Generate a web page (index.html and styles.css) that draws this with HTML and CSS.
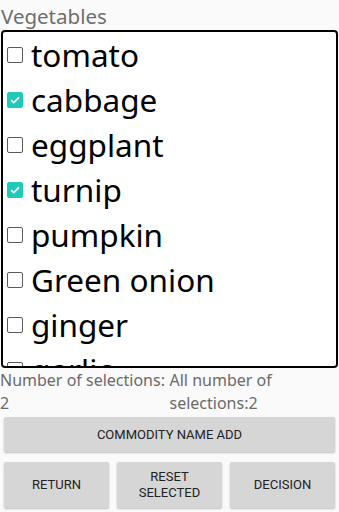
FILE: index.html
```html
<!DOCTYPE html>
<html>
<head>
<meta charset="utf-8">
<link rel="stylesheet" href="styles.css">
</head>
<body>
<div class="screen">
  <div class="title">Vegetables</div>
  <div class="list">
    <div class="row"><span class="cb"></span><span class="label">tomato</span></div>
    <div class="row"><span class="cb on"><svg viewBox="0 0 16 16"><path d="M3.5 8.2 L6.6 11 L12.5 5" fill="none" stroke="#fff" stroke-width="2"/></svg></span><span class="label">cabbage</span></div>
    <div class="row"><span class="cb"></span><span class="label">eggplant</span></div>
    <div class="row"><span class="cb on"><svg viewBox="0 0 16 16"><path d="M3.5 8.2 L6.6 11 L12.5 5" fill="none" stroke="#fff" stroke-width="2"/></svg></span><span class="label">turnip</span></div>
    <div class="row"><span class="cb"></span><span class="label">pumpkin</span></div>
    <div class="row"><span class="cb"></span><span class="label">Green onion</span></div>
    <div class="row"><span class="cb"></span><span class="label">ginger</span></div>
    <div class="row"><span class="cb"></span><span class="label">garlic</span></div>
  </div>
  <div class="counts">
    <div class="count">Number of selections: 2</div>
    <div class="count">All number of selections:2</div>
  </div>
  <div class="btn wide">COMMODITY NAME ADD</div>
  <div class="btnrow">
    <div class="btn">RETURN</div>
    <div class="btn">RESET<br>SELECTED</div>
    <div class="btn">DECISION</div>
  </div>
</div>
</body>
</html>
```
FILE: styles.css
```css
html, body {
  margin: 0;
  padding: 0;
  background: #fafafa;
}
.screen {
  width: 339px;
  height: 512px;
  overflow: hidden;
  font-family: "Noto Sans", "Open Sans", sans-serif;
  display: flex;
  flex-direction: column;
}
.title {
  height: 30px;
  font-size: 20.5px;
  line-height: 20px;
  padding-top: 6px;
  padding-left: 1px;
  box-sizing: border-box;
  color: #6e6e6e;
  overflow: hidden;
  flex-shrink: 0;
}
.list {
  margin: 0 1px 0 1px;
  height: 338px;
  box-sizing: border-box;
  border: 2.5px solid #000;
  border-radius: 4px;
  background: #fff;
  overflow: hidden;
  flex-shrink: 0;
}
.row {
  height: 45px;
  display: flex;
  align-items: center;
}
.cb {
  width: 16px;
  height: 16px;
  box-sizing: border-box;
  border: 1.5px solid #5a5a5a;
  border-radius: 2px;
  margin-left: 4px;
  margin-right: 8px;
  flex-shrink: 0;
  display: flex;
}
.cb.on {
  background: #1fcab8;
  border-color: #1fcab8;
}
.cb svg {
  width: 100%;
  height: 100%;
}
.label {
  font-size: 31.5px;
  line-height: 40px;
  color: #000;
  white-space: nowrap;
}
.counts {
  display: flex;
  height: 49px;
  font-size: 16px;
  line-height: 23px;
  color: #6a6a6a;
  flex-shrink: 0;
}
.count {
  width: 169.5px;
  padding-top: 1px;
}
.btn {
  background: #d6d6d6;
  border-radius: 2px;
  box-shadow: 0 1px 2px rgba(0,0,0,0.25);
  font-family: Roboto, "Noto Sans", sans-serif;
  font-size: 13px;
  line-height: 16px;
  color: #222;
  display: flex;
  align-items: center;
  justify-content: center;
  text-align: center;
}
.wide {
  margin: 0 4px;
  height: 35px;
  flex-shrink: 0;
}
.btnrow {
  margin: 10px 4px 0 4px;
  display: flex;
  gap: 8px;
  height: 46px;
  flex-shrink: 0;
}
.btnrow .btn {
  flex: 1;
}
```
